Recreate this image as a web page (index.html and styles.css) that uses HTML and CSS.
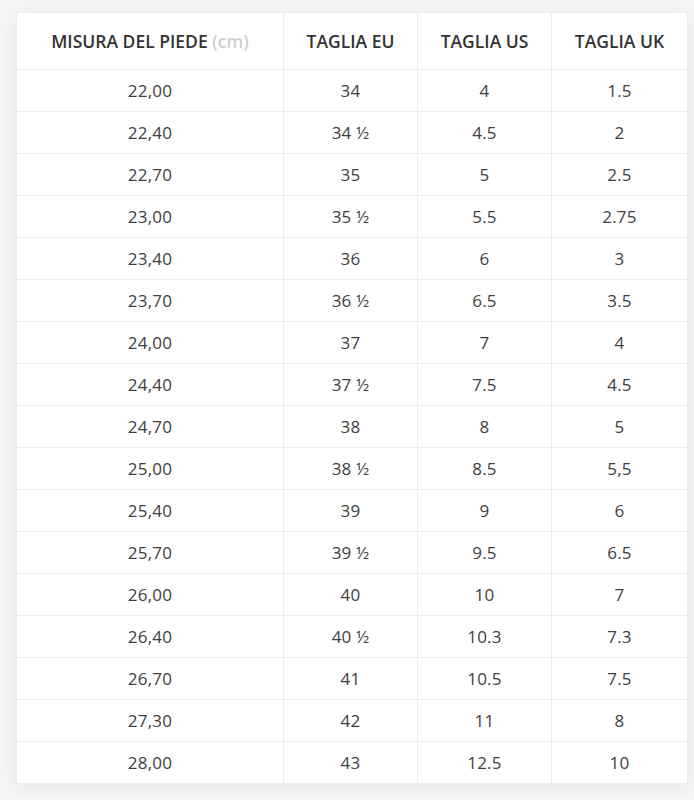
FILE: index.html
```html
<!DOCTYPE html>
<html lang="it">
<head>
<meta charset="utf-8">
<link rel="stylesheet" href="styles.css">
</head>
<body>
<div class="wrap">
<table class="sizes">
<thead>
<tr><th class="c1">MISURA DEL PIEDE <span class="unit">(cm)</span></th><th class="c2">TAGLIA EU</th><th class="c3">TAGLIA US</th><th class="c4">TAGLIA UK</th></tr>
</thead>
<tbody>
<tr><td>22,00</td><td>34</td><td>4</td><td>1.5</td></tr>
<tr><td>22,40</td><td>34 ½</td><td>4.5</td><td>2</td></tr>
<tr><td>22,70</td><td>35</td><td>5</td><td>2.5</td></tr>
<tr><td>23,00</td><td>35 ½</td><td>5.5</td><td>2.75</td></tr>
<tr><td>23,40</td><td>36</td><td>6</td><td>3</td></tr>
<tr><td>23,70</td><td>36 ½</td><td>6.5</td><td>3.5</td></tr>
<tr><td>24,00</td><td>37</td><td>7</td><td>4</td></tr>
<tr><td>24,40</td><td>37 ½</td><td>7.5</td><td>4.5</td></tr>
<tr><td>24,70</td><td>38</td><td>8</td><td>5</td></tr>
<tr><td>25,00</td><td>38 ½</td><td>8.5</td><td>5,5</td></tr>
<tr><td>25,40</td><td>39</td><td>9</td><td>6</td></tr>
<tr><td>25,70</td><td>39 ½</td><td>9.5</td><td>6.5</td></tr>
<tr><td>26,00</td><td>40</td><td>10</td><td>7</td></tr>
<tr><td>26,40</td><td>40 ½</td><td>10.3</td><td>7.3</td></tr>
<tr><td>26,70</td><td>41</td><td>10.5</td><td>7.5</td></tr>
<tr><td>27,30</td><td>42</td><td>11</td><td>8</td></tr>
<tr><td>28,00</td><td>43</td><td>12.5</td><td>10</td></tr>
</tbody>
</table>
</div>
</body>
</html>
```
FILE: styles.css
```css
html, body {
  margin: 0;
  padding: 0;
  background: #f6f6f6;
}
body {
  font-family: "Open Sans", "Liberation Sans", sans-serif;
  color: #3c3c3c;
}
.wrap {
  padding: 12px 10px 15px 16px;
}
.sizes {
  width: 667px;
  border-collapse: collapse;
  background: #ffffff;
  box-shadow: 0 4px 22px rgba(0, 0, 0, 0.07);
  table-layout: fixed;
}
.sizes th, .sizes td {
  border: 1px solid #ececec;
  text-align: center;
  padding: 0;
}
.sizes th {
  height: 56px;
  font-size: 17.5px;
  font-weight: 600;
  color: #333333;
}
.sizes td {
  height: 41px;
  font-size: 17px;
  color: #404040;
  letter-spacing: 0.2px;
}
.c1 { width: 266px; }
.c2 { width: 133px; }
.c3 { width: 133px; }
.c4 { width: 135px; }
.unit {
  color: #cfcfcf;
  font-weight: 600;
}
```
